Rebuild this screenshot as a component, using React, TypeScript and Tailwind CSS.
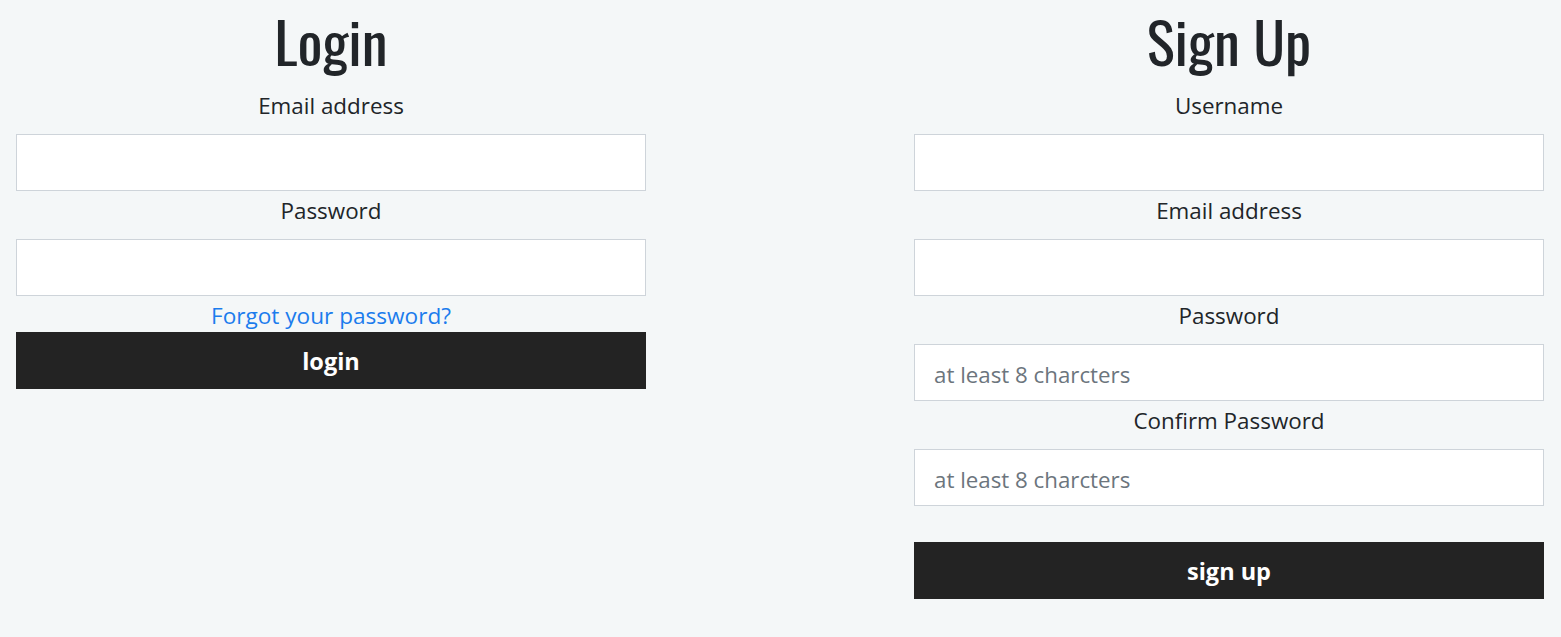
const body = { fontFamily: '"Open Sans", "Noto Sans", sans-serif' };
const heading = { fontFamily: '"Oswald", "Liberation Sans Narrow", "DejaVu Sans Condensed", sans-serif' };

function Field({ label, placeholder, type = "text" }: { label: string; placeholder?: string; type?: string }) {
  return (
    <>
      <label className="block text-center text-[22.4px] leading-[30px] mb-[13px] text-[#212529]">{label}</label>
      <input
        type={type}
        placeholder={placeholder}
        className="block w-full h-[57px] bg-white border border-[#ced4da] px-[19px] pt-[3px] text-[22.3px] text-[#495057] placeholder:text-[#6c757d] outline-none"
        style={body}
      />
    </>
  );
}

function Title({ children }: { children: string }) {
  return (
    <h1
      className="h-[91px] pb-[10px] flex items-center justify-center text-[56px] font-normal text-[#212529] origin-center scale-x-[1.05]"
      style={heading}
    >
      {children}
    </h1>
  );
}

export default function App() {
  return (
    <div className="min-h-[637px] bg-[#f4f7f8] px-4" style={body}>
      <div className="flex justify-between items-start">
        {/* Login */}
        <div className="w-[630px]">
          <Title>Login</Title>
          <Field label="Email address" type="email" />
          <div className="mt-[5px]">
            <Field label="Password" type="password" />
          </div>
          <a href="#" className="block text-center text-[22.6px] leading-[30px] mt-[5px] text-[#1b7ced]">
            Forgot your password?
          </a>
          <button className="block w-full h-[57px] mt-px bg-[#232323] text-white text-[23.5px] font-bold pt-[2px]">
            login
          </button>
        </div>

        {/* Sign up */}
        <div className="w-[630px] mr-px">
          <Title>Sign Up</Title>
          <Field label="Username" />
          <div className="mt-[5px]">
            <Field label="Email address" type="email" />
          </div>
          <div className="mt-[5px]">
            <Field label="Password" type="password" placeholder="at least 8 charcters" />
          </div>
          <div className="mt-[5px]">
            <Field label="Confirm Password" type="password" placeholder="at least 8 charcters" />
          </div>
          <button className="block w-full h-[57px] mt-[36px] bg-[#232323] text-white text-[23.5px] font-bold pt-[2px]">
            sign up
          </button>
        </div>
      </div>
    </div>
  );
}
